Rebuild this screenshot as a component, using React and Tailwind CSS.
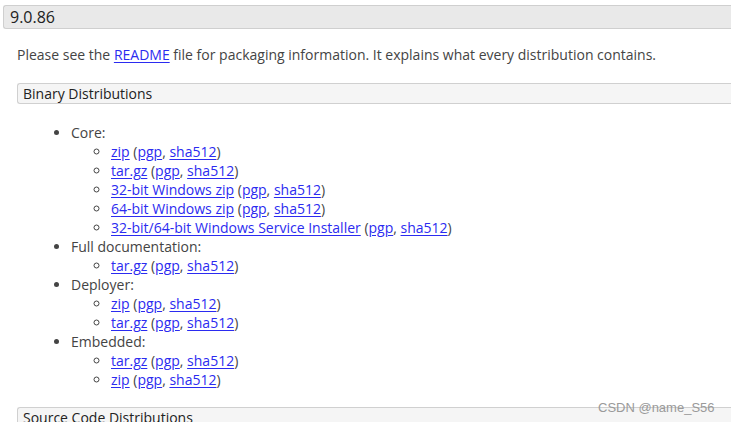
export default function App() {
	const groups = [
		{
			name: "Core:",
			items: [
				"zip",
				"tar.gz",
				"32-bit Windows zip",
				"64-bit Windows zip",
				"32-bit/64-bit Windows Service Installer",
			],
		},
		{ name: "Full documentation:", items: ["tar.gz"] },
		{ name: "Deployer:", items: ["zip", "tar.gz"] },
		{ name: "Embedded:", items: ["tar.gz", "zip"] },
	];

	const link = "text-[#2b2bf0] underline underline-offset-2";

	return (
		<div
			className="relative h-[422px] overflow-hidden bg-white text-[14px] leading-[19px] text-[#444]"
			style={{ fontFamily: '"Open Sans", "Noto Sans", sans-serif' }}
		>
			<div className="ml-[3px] mt-[5px] flex h-[24px] items-center rounded-l-[3px] border border-r-0 border-[#cfcfcf] bg-[#e9e9e9] pl-[6px] text-[16px] text-[#222]">
				9.0.86
			</div>

			<div className="pl-[17px]">
				<p className="mt-[16px]">
					Please see the <a href="#" className={link}>README</a> file for packaging
					information. It explains what every distribution contains.
				</p>

				<div className="mt-[19px] flex h-[21px] items-center rounded-l-[3px] border border-r-0 border-[#d0d0d0] bg-[#f5f5f5] pl-[5px] text-[#222]">
					Binary Distributions
				</div>

				<ul className="mt-[19px] list-disc pl-[54px]">
					{groups.map((g) => (
						<li key={g.name}>
							{g.name}
							<ul className="list-[circle] pl-[40px]">
								{g.items.map((it, i) => (
									<li key={i}>
										<a href="#" className={link}>{it}</a> (
										<a href="#" className={link}>pgp</a>,{" "}
										<a href="#" className={link}>sha512</a>)
									</li>
								))}
							</ul>
						</li>
					))}
				</ul>

				<div className="mt-[18px] flex h-[21px] items-center rounded-l-[3px] border border-r-0 border-[#d0d0d0] bg-[#f5f5f5] pl-[5px] text-[#222]">
					Source Code Distributions
				</div>
			</div>

			<div
				className="absolute left-[598px] top-[398px] text-[13px] text-[#9a9a9a]"
				style={{ fontFamily: '"Liberation Sans", Arial, sans-serif' }}
			>
				CSDN @name_S56
			</div>
		</div>
	);
}
